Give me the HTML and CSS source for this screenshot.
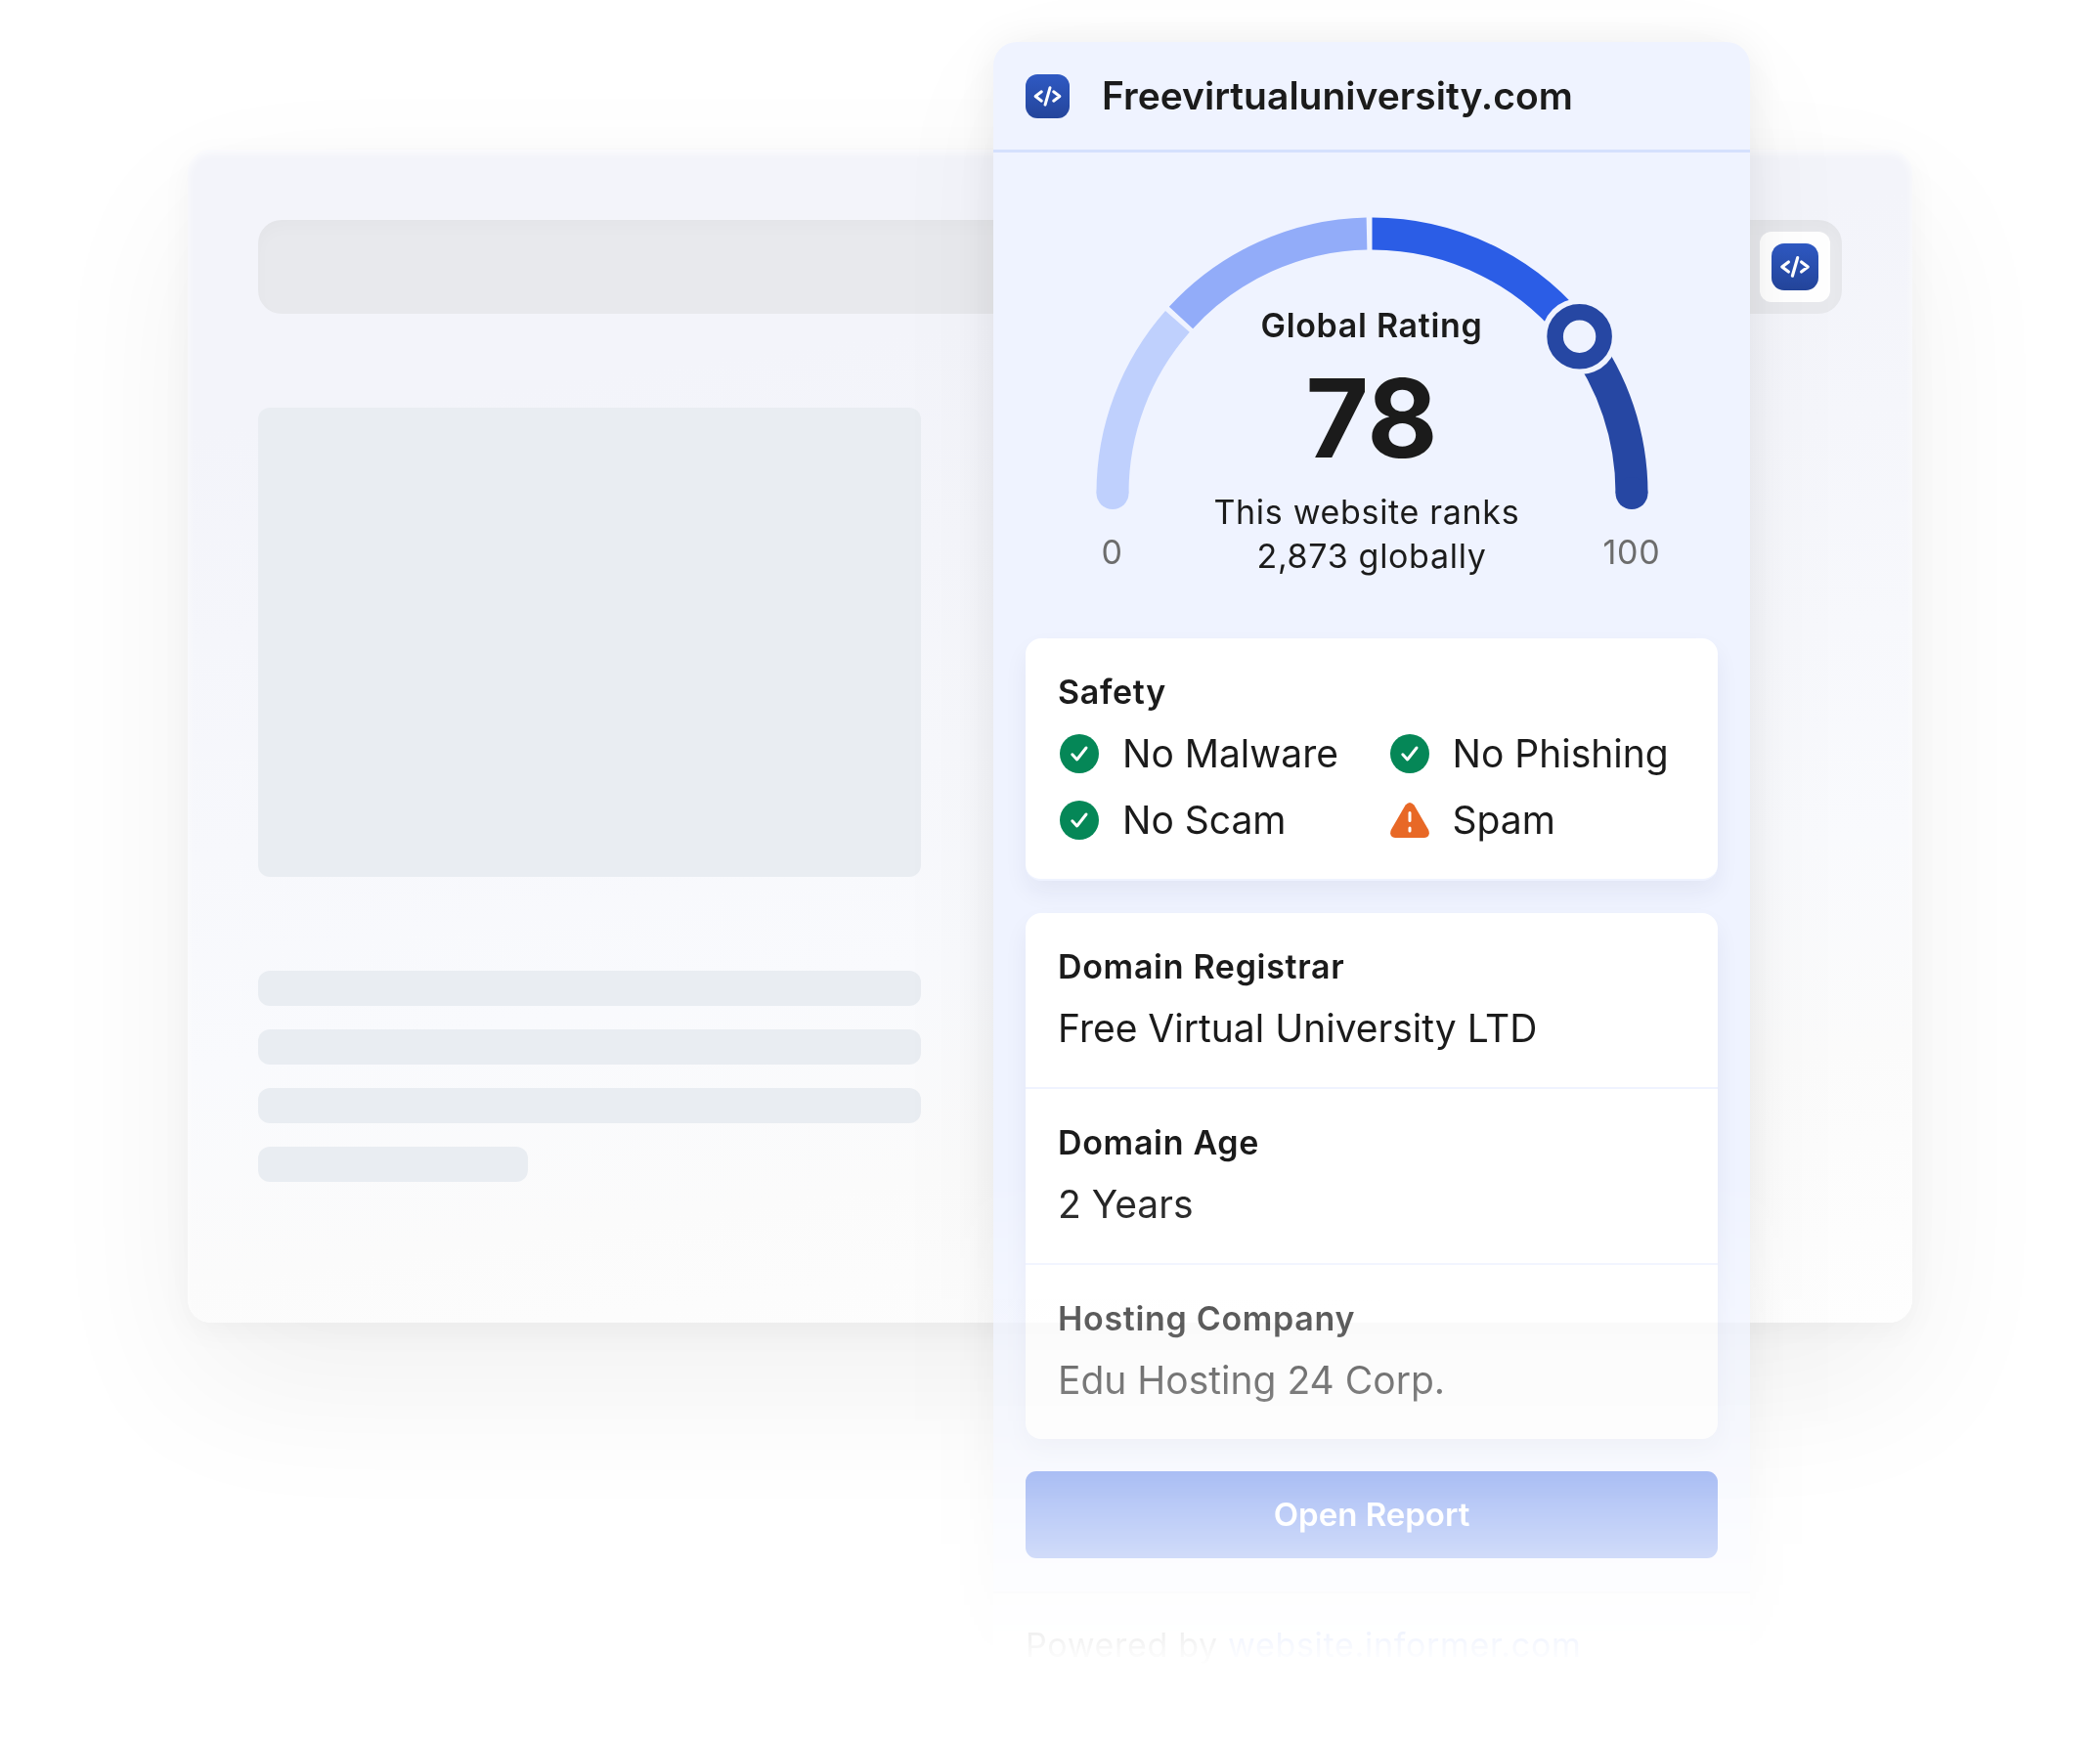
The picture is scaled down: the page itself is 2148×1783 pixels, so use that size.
FILE: index.html
```html
<!DOCTYPE html>
<html lang="en">
<head>
  <meta charset="UTF-8">
  <meta name="viewport" content="width=device-width, initial-scale=1">
  <title>Freevirtualuniversity.com</title>
  <link rel="stylesheet" href="styles.css">
</head>
<body>

<!-- shared icons -->
<svg class="sprite" aria-hidden="true">
  <defs>
    <linearGradient id="logo-bg" x1="0" y1="0" x2="0" y2="1">
      <stop offset="0" stop-color="#2f59c3"/>
      <stop offset="1" stop-color="#24459b"/>
    </linearGradient>
  </defs>
  <symbol id="logo" viewBox="0 0 48 48">
    <rect width="48" height="48" rx="13" fill="url(#logo-bg)"/>
    <path d="M17.4 19 L10.8 24 L17.4 29 M26.7 14.6 L21.4 33.2 M30.6 19 L37.2 24 L30.6 29" fill="none" stroke="#fff" stroke-width="3.2" stroke-linecap="round" stroke-linejoin="round"/>
  </symbol>
  <symbol id="check" viewBox="0 0 40 40">
    <circle cx="20" cy="20" r="20" fill="#058757"/>
    <path d="M12.8 20.8 L17.6 26 L27 14" fill="none" stroke="#fff" stroke-width="3" stroke-linecap="round" stroke-linejoin="round"/>
  </symbol>
  <symbol id="warning" viewBox="0 0 40 40">
    <path d="M15.6 4.6 Q20 -0.6 24.4 4.6 L39.2 30 Q41.6 36.6 35 38 L5 38 Q-1.6 36.6 0.8 30 Z" fill="#e86826"/>
    <path d="M20 12.5 V20.5 M20 28 V31" fill="none" stroke="#fff" stroke-width="3" stroke-linecap="round"/>
  </symbol>
</svg>

<main class="scene">

  <div class="browser">
    <div class="address-bar">
      <button type="button" class="extension" aria-label="Website Informer">
        <svg class="extension-icon"><use href="#logo"/></svg>
      </button>
    </div>
    <div class="skeleton">
      <div class="skeleton-image"></div>
      <div class="skeleton-line"></div>
      <div class="skeleton-line"></div>
      <div class="skeleton-line"></div>
      <div class="skeleton-line short"></div>
    </div>
  </div>

  <div class="popup-layer">
    <section class="popup">
      <header class="popup-header">
        <svg class="popup-logo"><use href="#logo"/></svg>
        <h1>Freevirtualuniversity.com</h1>
      </header>

      <div class="rating">
        <div class="gauge">
          <svg class="gauge-arc" viewBox="0 0 565 300" aria-hidden="true">
            <g fill="none" stroke-width="33">
              <path d="M17 282.5 A265.5 265.5 0 0 1 83.4 106.9" stroke="#bfd0fd"/>
              <path d="M87 103 A265.5 265.5 0 0 1 277 17" stroke="#92acf9"/>
              <path d="M282.5 17 A265.5 265.5 0 0 1 494.6 122.7" stroke="#2b5de6"/>
              <path d="M494.6 122.7 A265.5 265.5 0 0 1 548 282.5" stroke="#2647a3"/>
            </g>
            <circle cx="17" cy="282.5" r="16.5" fill="#bfd0fd"/>
            <circle cx="548" cy="282.5" r="16.5" fill="#2647a3"/>
            <circle cx="494.6" cy="122.3" r="39" fill="#eff3ff"/>
            <circle cx="494.6" cy="122.3" r="25" fill="#eff3ff" stroke="#2647a3" stroke-width="16.6"/>
          </svg>
          <div class="gauge-text">
            <h2 class="label">Global Rating</h2>
            <div class="score">78</div>
            <p>This website ranks&nbsp;<br>2,873 globally</p>
          </div>
          <div class="gauge-scale">
            <span>0</span>
            <span>100</span>
          </div>
        </div>
      </div>

      <div class="cards">
        <div class="card safety">
          <h2 class="label">Safety</h2>
          <ul class="safety-list">
            <li><svg><use href="#check"/></svg>No Malware</li>
            <li><svg><use href="#check"/></svg>No Phishing</li>
            <li><svg><use href="#check"/></svg>No Scam</li>
            <li><svg><use href="#warning"/></svg>Spam</li>
          </ul>
        </div>

        <dl class="card details">
          <div class="row">
            <dt class="label">Domain Registrar</dt>
            <dd>Free Virtual University LTD</dd>
          </div>
          <div class="row">
            <dt class="label">Domain Age</dt>
            <dd>2 Years</dd>
          </div>
          <div class="row">
            <dt class="label">Hosting Company</dt>
            <dd>Edu Hosting 24 Corp.</dd>
          </div>
        </dl>

        <button type="button" class="report-btn">Open Report</button>
      </div>

      <footer class="popup-footer">Powered by <a href="#">website.informer.com</a></footer>
    </section>
  </div>

</main>
</body>
</html>
```
FILE: styles.css
```css
* {
  box-sizing: border-box;
}
body {
  margin: 0;
  background: #fff;
  color: #1b1b1b;
  font-family: Inter, "Liberation Sans", sans-serif;
  font-size: 39px;
  line-height: 56px;
}
h1, h2, p, ul, dl, dd {
  margin: 0;
  padding: 0;
}
.sprite {
  position: absolute;
  width: 0;
  height: 0;
}

/* the browser window and the popup share one grid cell */
.scene {
  display: grid;
  overflow: hidden;
}
.browser,
.popup-layer {
  grid-area: 1 / 1;
}

/* browser window */
.browser {
  align-self: start;
  margin: 153px 192px 0;
  padding: 72px 72px 144px;
  border-radius: 24px;
  background: linear-gradient(172deg, #f3f4fa 20%, #f9fafd 65%, #fbfbfb 80%, #fefefe 100%);
  box-shadow:
    inset 0 4px 8px rgba(255, 255, 255, 0.7),
    0 8px 32px rgba(0, 0, 0, 0.04),
    0 64px 160px rgba(0, 0, 0, 0.06);
}
.address-bar {
  display: flex;
  justify-content: flex-end;
  padding: 12px;
  border-radius: 24px;
  background: #e8e9ed;
  box-shadow: inset 0 8px 16px rgba(0, 0, 0, 0.02);
}
.extension {
  display: flex;
  padding: 12px;
  border: 0;
  border-radius: 12px;
  background: #fff;
}
.extension-icon {
  width: 48px;
  height: 48px;
}
.skeleton {
  display: flex;
  flex-direction: column;
  gap: 24px;
  max-width: 678px;
  margin-top: 96px;
}
.skeleton-image {
  height: 480px;
  margin-bottom: 72px;
  border-radius: 12px;
  background: #e9edf2;
}
.skeleton-line {
  height: 36px;
  border-radius: 12px;
  background: #e9edf2;
}
.skeleton-line.short {
  width: 276px;
}

/* popup, fading out to the bottom together with its shadow */
.popup-layer {
  justify-self: end;
  max-width: 100%;
  margin-right: 198px;
  padding: 43px 160px 45px;
  -webkit-mask-image: linear-gradient(#000 1204px, transparent 1704px);
  mask-image: linear-gradient(#000 1204px, transparent 1704px);
}
.popup {
  width: 774px;
  max-width: 100%;
  border-radius: 24px;
  background: #eff3ff;
  box-shadow:
    0 4px 48px rgba(0, 0, 0, 0.08),
    0 32px 128px rgba(0, 0, 0, 0.04);
}
.popup-header {
  display: flex;
  align-items: center;
  gap: 33px;
  height: 113px;
  padding: 0 33px;
  border-bottom: 3px solid #d5e0fd;
}
.popup-logo {
  width: 45px;
  height: 45px;
}
h1 {
  font-size: 39px;
  font-weight: 600;
}
.label {
  font-size: 34px;
  font-weight: 600;
  line-height: 45px;
  letter-spacing: 0.02em;
}

/* gauge */
.rating {
  display: flex;
  justify-content: center;
  padding: 66px 33px 62px;
}
.gauge {
  display: grid;
  width: 565px;
}
.gauge > * {
  grid-area: 1 / 1;
}
.gauge-arc {
  width: 100%;
}
.gauge-text {
  padding-top: 88px;
  text-align: center;
  font-size: 34px;
  line-height: 45px;
  letter-spacing: 0.02em;
}
.score {
  margin: 6px 0;
  font-size: 111px;
  font-weight: 700;
  line-height: 134px;
  letter-spacing: 0;
}
.gauge-scale {
  display: flex;
  justify-content: space-between;
  align-self: end;
  margin: 0 -12px 4px;
  color: #6c6c6c;
  font-size: 34px;
  line-height: 45px;
  letter-spacing: 0.02em;
}
.gauge-scale span {
  width: 58px;
  text-align: center;
}

/* cards */
.cards {
  display: flex;
  flex-direction: column;
  gap: 33px;
  padding: 0 33px 34px;
}
.card {
  padding: 32px 33px;
  border-radius: 16px;
  background: #fff;
  box-shadow: 0 12px 24px rgba(30, 40, 80, 0.06);
}
.safety {
  border-bottom: 2px solid #eff3ff;
}
.safety-list {
  display: grid;
  grid-template-columns: 1fr 1fr;
  gap: 12px 33px;
  margin-top: 13px;
  list-style: none;
}
.safety-list li {
  display: flex;
  align-items: center;
  gap: 22px;
  white-space: nowrap;
}
.safety-list svg {
  flex: none;
  width: 44px;
  height: 40px;
}
.details {
  padding: 0;
}
.row {
  padding: 32px 33px;
}
.row + .row {
  border-top: 2px solid #eff3ff;
}
.row dd {
  margin-top: 13px;
}
.report-btn {
  height: 89px;
  border: 0;
  border-radius: 11px;
  background: #2b5de6;
  color: #fff;
  font: 600 33px/45px Inter, "Liberation Sans", sans-serif;
}
.popup-footer {
  padding: 30px 33px 33px;
  border-top: 2px solid #e2e6ee;
  background: #f8f9fb;
  font-size: 34px;
  line-height: 45px;
  letter-spacing: 0.02em;
}
.popup-footer a {
  color: #2b5de6;
  text-decoration: none;
}
```
